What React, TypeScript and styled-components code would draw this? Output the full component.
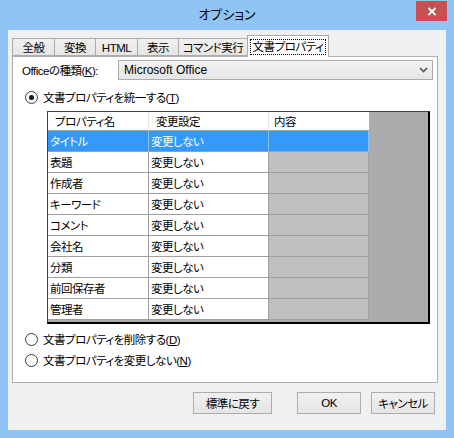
import React from "react";
import styled, { createGlobalStyle } from "styled-components";

const GlobalStyle = createGlobalStyle`
  html, body {
    margin: 0;
    padding: 0;
    background: #ffffff;
  }
  body {
    font-family: "Liberation Sans", "Noto Sans CJK JP", sans-serif;
    font-size: 11.5px;
    letter-spacing: -0.5px;
    font-feature-settings: "palt";
    color: #000;
  }
`;

const TABS = [
  { label: "全般", width: 43 },
  { label: "変換", width: 42 },
  { label: "HTML", width: 43 },
  { label: "表示", width: 42 },
  { label: "コマンド実行", width: 70 },
  { label: "文書プロパティ", width: 82, active: true },
];

const PROPS = [
  "タイトル",
  "表題",
  "作成者",
  "キーワード",
  "コメント",
  "会社名",
  "分類",
  "前回保存者",
  "管理者",
];

const Window = styled.div`
  width: 454px;
  height: 438px;
  background: #8fc4f4;
  display: flex;
  flex-direction: column;
`;

const TitleBar = styled.div`
  height: 30px;
  display: grid;
  grid-template-columns: 38px 1fr 38px;
  align-items: start;
`;

const Title = styled.div`
  grid-column: 2;
  text-align: center;
  line-height: 30px;
  font-size: 13px;
  letter-spacing: 0;
`;

const CloseButton = styled.div`
  grid-column: 3;
  width: 31px;
  height: 20px;
  margin-top: 1px;
  background: #c75050;
  display: flex;
  align-items: center;
  justify-content: center;
`;

const Client = styled.div`
  flex: 1;
  margin: 0 8px 8px;
  background: #f0f0f0;
  padding: 5px 11px 0 4px;
  display: flex;
  flex-direction: column;
`;

const TabStrip = styled.div`
  display: flex;
  align-items: flex-end;
  height: 21px;
  position: relative;
  z-index: 1;
`;

const Tab = styled.div<{ $active?: boolean; $w: number }>`
  box-sizing: border-box;
  width: ${(p) => p.$w}px;
  height: ${(p) => (p.$active ? 22 : 18)}px;
  margin-bottom: ${(p) => (p.$active ? -1 : 0)}px;
  margin-left: -1px;
  border: 1px solid #acacac;
  border-bottom: ${(p) => (p.$active ? "none" : "1px solid #acacac")};
  background: ${(p) =>
    p.$active ? "#ffffff" : "linear-gradient(#f0f0f0, #e5e5e5)"};
  display: flex;
  align-items: center;
  justify-content: center;
  padding-top: ${(p) => (p.$active ? 0 : 1)}px;
  white-space: nowrap;
  &:first-child {
    margin-left: 0;
  }
`;

const TabLabel = styled.span<{ $focus?: boolean }>`
  padding: 0 2px;
  line-height: 14px;
  outline: ${(p) => (p.$focus ? "1px dotted #000" : "none")};
`;

const Panel = styled.div`
  width: 426px;
  height: 327px;
  box-sizing: border-box;
  border: 1px solid #acacac;
  background: #ffffff;
  padding: 3px 4px 0 9px;
  display: flex;
  flex-direction: column;
`;

const FieldRow = styled.div`
  display: flex;
  align-items: center;
  height: 20px;
`;

const FieldLabel = styled.div`
  width: 96px;
  white-space: nowrap;
`;

const Combo = styled.div`
  flex: 1;
  height: 20px;
  box-sizing: border-box;
  border: 1px solid #acacac;
  background: linear-gradient(#f2f2f2, #e6e6e6);
  display: flex;
  align-items: center;
  justify-content: space-between;
  padding: 0 4px 0 5px;
  font-size: 12px;
  letter-spacing: 0;
`;

const RadioRow = styled.label<{ $top: number }>`
  display: flex;
  align-items: center;
  gap: 5px;
  height: 16px;
  margin-top: ${(p) => p.$top}px;
  margin-left: 3px;
  white-space: nowrap;
`;

const RadioCircle = styled.span<{ $checked?: boolean }>`
  width: 13px;
  height: 13px;
  box-sizing: border-box;
  border-radius: 50%;
  border: 1px solid #3c3c3c;
  background: #ffffff;
  display: flex;
  align-items: center;
  justify-content: center;
  &::after {
    content: "";
    width: 5px;
    height: 5px;
    border-radius: 50%;
    background: ${(p) => (p.$checked ? "#1a1a1a" : "transparent")};
  }
`;

const Key = styled.span`
  text-decoration: underline;
`;

const Grid = styled.div`
  margin: 6px 0 0 25px;
  width: 383px;
  height: 213px;
  box-sizing: border-box;
  border-top: 1px solid #404040;
  border-left: 1px solid #404040;
  border-right: 2px solid #000;
  border-bottom: 2px solid #000;
  background: #ababab;
  display: grid;
  grid-template-columns: 101px 120px 100px;
  grid-template-rows: 19px;
  grid-auto-rows: 21px;
  align-content: start;
`;

const HeadCell = styled.div`
  background: #ffffff;
  border-right: 1px solid #e6e6e6;
  border-bottom: 1px solid #a0a0a0;
  padding-left: 7px;
  display: flex;
  align-items: center;
  &:nth-child(3) {
    border-right: none;
    padding-left: 5px;
  }
`;

const Cell = styled.div<{ $selected?: boolean; $dim?: boolean }>`
  box-sizing: border-box;
  background: ${(p) => (p.$selected ? "#3399ff" : p.$dim ? "#c0c0c0" : "#ffffff")};
  color: ${(p) => (p.$selected ? "#ffffff" : "#000")};
  border-right: 1px solid ${(p) => (p.$selected ? "#8cc0f0" : "#a0a0a0")};
  border-bottom: 1px solid #a0a0a0;
  padding-left: 2px;
  display: flex;
  align-items: center;
  white-space: nowrap;
`;

const ButtonRow = styled.div`
  display: flex;
  justify-content: flex-end;
  margin-top: 9px;
`;

const Button = styled.div<{ $w: number; $gap: number }>`
  width: ${(p) => p.$w}px;
  height: 22px;
  box-sizing: border-box;
  margin-left: ${(p) => p.$gap}px;
  border: 1px solid #acacac;
  background: linear-gradient(#f0f0f0, #e5e5e5);
  display: flex;
  align-items: center;
  justify-content: center;
`;

export default function App() {
  return (
    <Window>
      <GlobalStyle />
      <TitleBar>
        <Title>オプション</Title>
        <CloseButton>
          <svg width="10" height="9" viewBox="0 0 10 9">
            <path d="M1.5 1 L8.5 8 M8.5 1 L1.5 8" stroke="#ffffff" strokeWidth="2" />
          </svg>
        </CloseButton>
      </TitleBar>
      <Client>
        <TabStrip>
          {TABS.map((t) => (
            <Tab key={t.label} $w={t.width} $active={t.active}>
              <TabLabel $focus={t.active}>{t.label}</TabLabel>
            </Tab>
          ))}
        </TabStrip>
        <Panel>
          <FieldRow>
            <FieldLabel>
              Officeの種類(<Key>K</Key>):
            </FieldLabel>
            <Combo>
              <span>Microsoft Office</span>
              <svg width="9" height="6" viewBox="0 0 9 6">
                <path d="M1 1 L4.5 4.5 L8 1" stroke="#555" strokeWidth="1.6" fill="none" />
              </svg>
            </Combo>
          </FieldRow>
          <RadioRow $top={9}>
            <RadioCircle $checked />
            <span>
              文書プロパティを統一する(<Key>T</Key>)
            </span>
          </RadioRow>
          <Grid>
            <HeadCell>プロパティ名</HeadCell>
            <HeadCell>変更設定</HeadCell>
            <HeadCell>内容</HeadCell>
            {PROPS.map((name, i) => (
              <React.Fragment key={name}>
                <Cell $selected={i === 0}>{name}</Cell>
                <Cell $selected={i === 0}>変更しない</Cell>
                <Cell $selected={i === 0} $dim />
              </React.Fragment>
            ))}
          </Grid>
          <RadioRow $top={7}>
            <RadioCircle />
            <span>
              文書プロパティを削除する(<Key>D</Key>)
            </span>
          </RadioRow>
          <RadioRow $top={5}>
            <RadioCircle />
            <span>
              文書プロパティを変更しない(<Key>N</Key>)
            </span>
          </RadioRow>
        </Panel>
        <ButtonRow>
          <Button $w={79} $gap={0}>標準に戻す</Button>
          <Button $w={64} $gap={25}>OK</Button>
          <Button $w={64} $gap={10}>キャンセル</Button>
        </ButtonRow>
      </Client>
    </Window>
  );
}
